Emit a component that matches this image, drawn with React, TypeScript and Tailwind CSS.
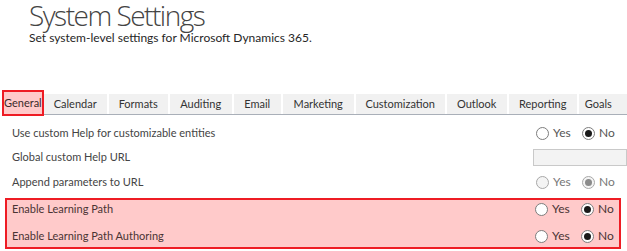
const tabs = [
  { label: "Calendar", w: "w-[63px] justify-center" },
  { label: "Formats", w: "w-[59px] justify-center" },
  { label: "Auditing", w: "w-[62px] justify-center" },
  { label: "Email", w: "w-[47px] justify-center" },
  { label: "Marketing", w: "w-[71px] justify-center" },
  { label: "Customization", w: "w-[89px] justify-center" },
  { label: "Outlook", w: "w-[60px] justify-center" },
  { label: "Reporting", w: "w-[68px] justify-center" },
  { label: "Goals", w: "w-[60px] pl-[6px]" },
]

function Radio({ checked, disabled }: { checked?: boolean; disabled?: boolean }) {
  return (
    <span
      className={`flex h-[13px] w-[13px] items-center justify-center rounded-full border ${
        disabled ? "border-[#a8a8a8] bg-[#f4f4f4]" : "border-[#7d7d7d] bg-white"
      }`}
    >
      {checked && (
        <span className={`h-[7px] w-[7px] rounded-full ${disabled ? "bg-[#8a8a8a]" : "bg-[#1a1a1a]"}`} />
      )}
    </span>
  )
}

function YesNo({ no, disabled, tone }: { no?: boolean; disabled?: boolean; tone?: string }) {
  return (
    <div className={`flex w-[80px] items-center text-[12px] ${tone ?? "text-[#555]"}`}>
      <Radio checked={!no} disabled={disabled} />
      <span className="ml-[4px] w-[29px]">Yes</span>
      <Radio checked={no} disabled={disabled} />
      <span className="ml-[4px]">No</span>
    </div>
  )
}

export default function App() {
  return (
    <div
      className="relative h-[251px] w-[627px] overflow-hidden bg-white text-[11px] text-[#444]"
      style={{ fontFamily: 'Lato, "Open Sans", sans-serif' }}
    >
      <div className="pl-[29px]">
        <h1
          className="text-[28px] font-light leading-[30px] tracking-[-1.5px] text-[#444]"
          style={{ fontFamily: '"Open Sans", sans-serif' }}
        >
          System Settings
        </h1>
        <p className="text-[12px] leading-[16px] text-[#262626]">
          Set system-level settings for Microsoft Dynamics 365.
        </p>
      </div>

      <div className="mt-[44px] flex h-[26px] items-start">
        <div className="ml-[2px] flex h-[26px] w-[56px] items-center justify-center border-2 border-[#ee1c24] bg-[#ffcaca] text-[#3a2a2a]">
          General
        </div>
        <div className="mt-[4px] flex flex-1 gap-[2px] border-b border-[#a9afb8]">
          {tabs.map((t) => (
            <div key={t.label} className={`flex h-[20px] shrink-0 items-center bg-[#f1f1f1] text-[#333] ${t.w}`}>
              {t.label}
            </div>
          ))}
        </div>
      </div>

      <div className="mt-[5px]">
        <div className="flex h-[24px] items-center pl-[12px] pr-[11px]">
          <span className="flex-1">Use custom Help for customizable entities</span>
          <YesNo no />
        </div>
        <div className="flex h-[25px] items-center pl-[12px]">
          <span className="flex-1">Global custom Help URL</span>
          <div className="h-[17px] w-[94px] border border-[#c9c9c9] bg-[#f3f3f3]" />
        </div>
        <div className="flex h-[24px] items-center pl-[12px] pr-[11px]">
          <span className="flex-1">Append parameters to URL</span>
          <YesNo no disabled tone="text-[#777]" />
        </div>
      </div>

      <div className="ml-[5px] mt-[4px] w-[616px] border-2 border-[#ee1c24] bg-[#ffcaca] text-[#4a3434]">
        <div className="flex h-[18px] items-center pl-[5px] pr-[4px]">
          <span className="flex-1">Enable Learning Path</span>
          <YesNo no tone="text-[#4a3434]" />
        </div>
        <div className="flex h-[29px] items-center pl-[5px] pr-[4px] pt-[7px]">
          <span className="flex-1">Enable Learning Path Authoring</span>
          <YesNo no tone="text-[#4a3434]" />
        </div>
      </div>
    </div>
  )
}
